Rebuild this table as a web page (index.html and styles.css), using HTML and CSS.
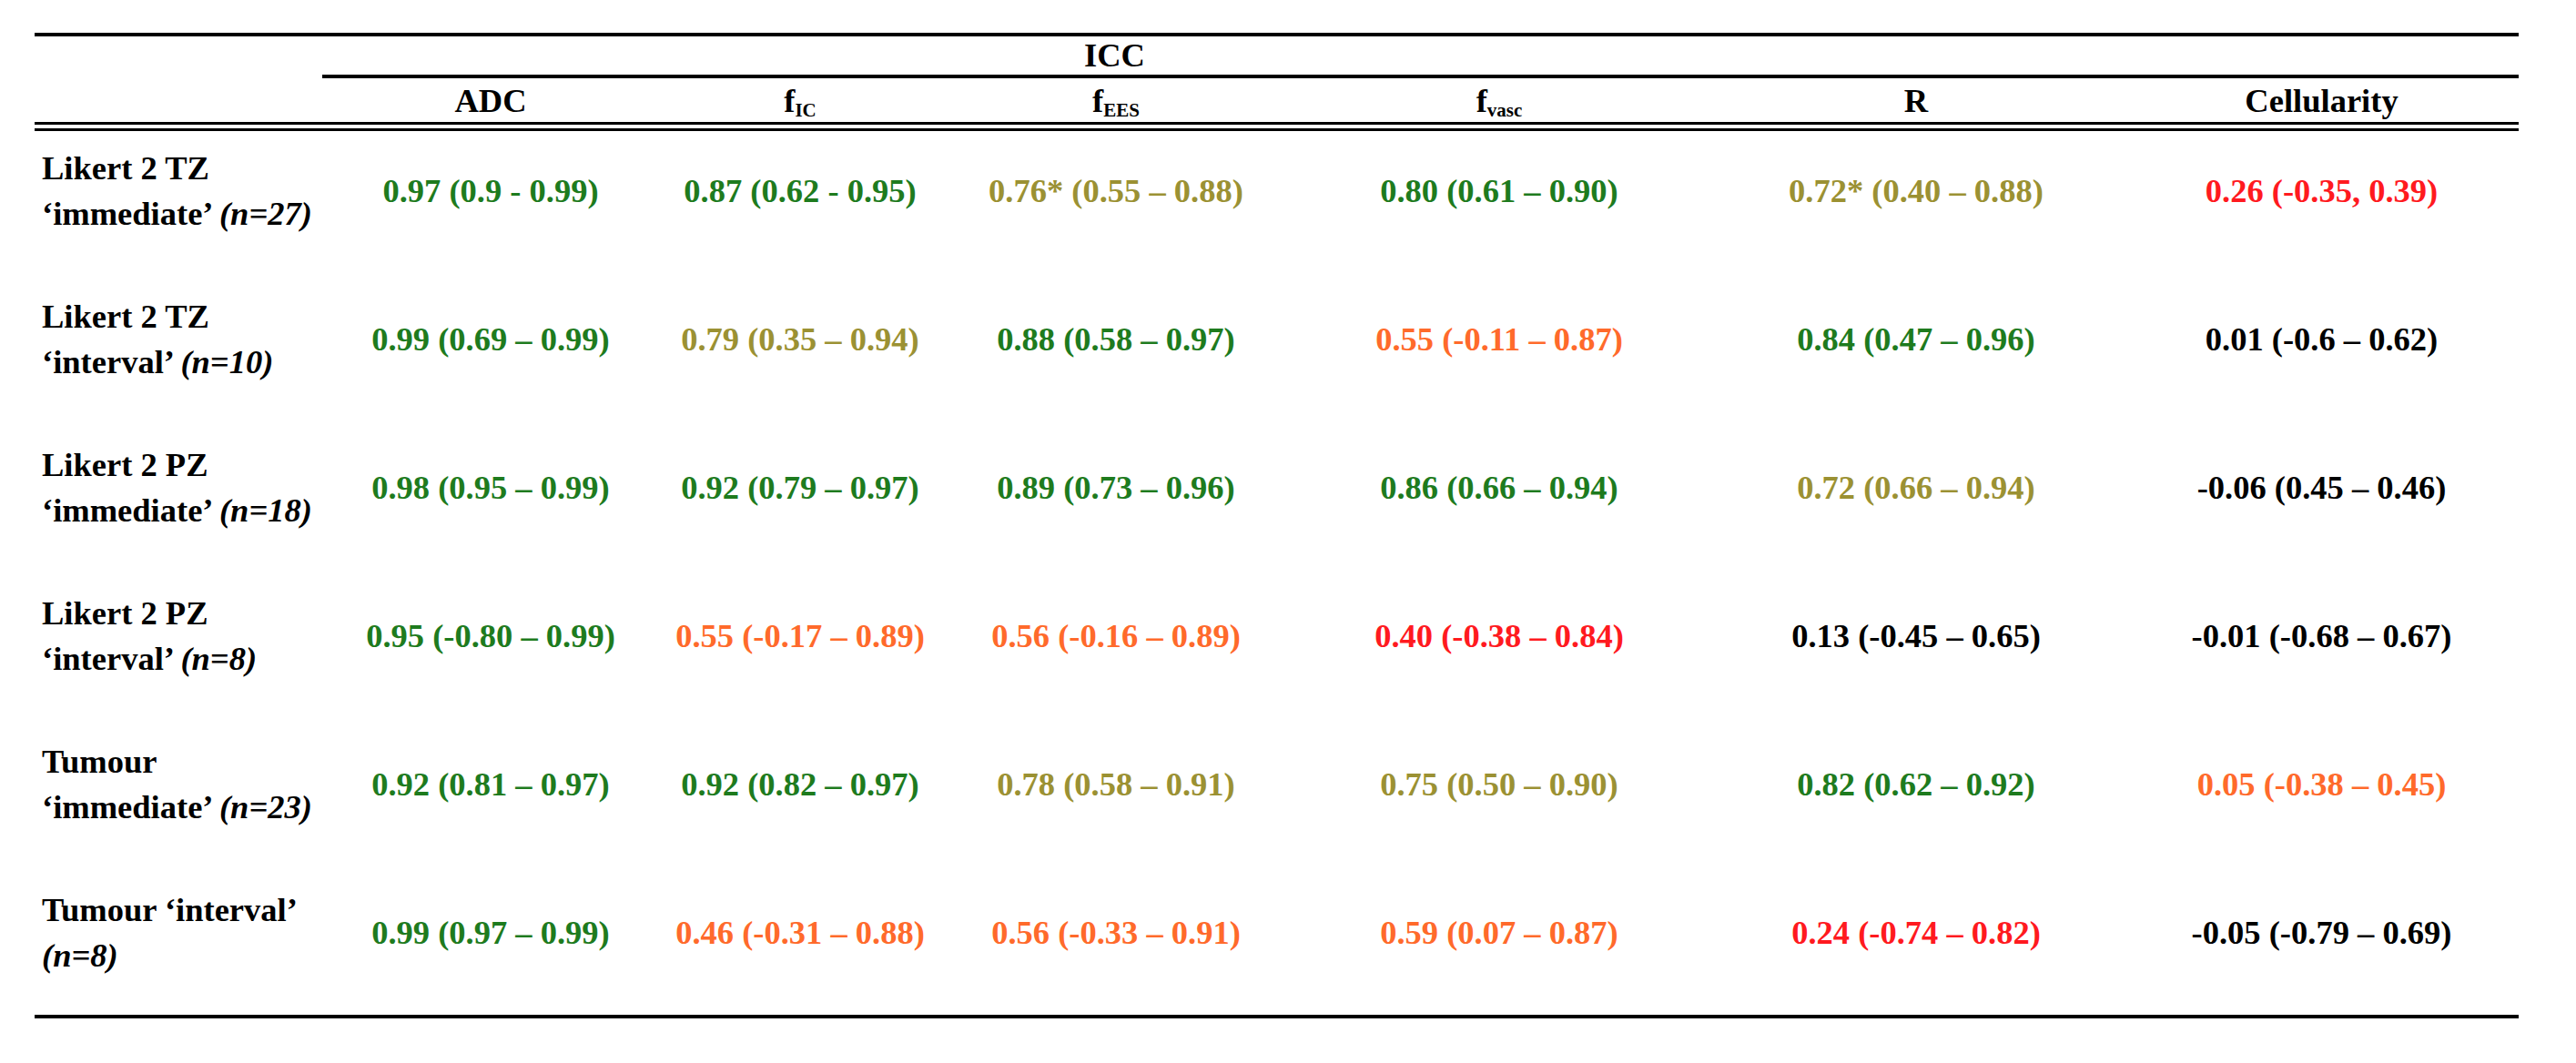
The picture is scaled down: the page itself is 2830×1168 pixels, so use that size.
FILE: index.html
```html
<!DOCTYPE html>
<html lang="en">
<head>
<meta charset="utf-8">
<title>ICC table</title>
<link rel="stylesheet" href="styles.css">
</head>
<body>
<table class="icc">
  <colgroup>
    <col class="c-label">
    <col class="c-adc">
    <col class="c-fic">
    <col class="c-fees">
    <col class="c-fvasc">
    <col class="c-r">
    <col class="c-cell">
  </colgroup>
  <thead>
    <tr class="h1">
      <th class="corner" rowspan="2"></th>
      <th class="group" colspan="6">ICC</th>
    </tr>
    <tr class="h2">
      <th>ADC</th>
      <th>f<span class="sub">IC</span></th>
      <th>f<span class="sub">EES</span></th>
      <th>f<span class="sub">vasc</span></th>
      <th>R</th>
      <th>Cellularity</th>
    </tr>
  </thead>
  <tbody>
    <tr>
      <td class="label">Likert 2 TZ<br>‘immediate’ <i>(n=27)</i></td>
      <td class="g">0.97 (0.9 - 0.99)</td>
      <td class="g">0.87 (0.62 - 0.95)</td>
      <td class="o">0.76* (0.55 – 0.88)</td>
      <td class="g">0.80 (0.61 – 0.90)</td>
      <td class="o">0.72* (0.40 – 0.88)</td>
      <td class="r">0.26 (-0.35, 0.39)</td>
    </tr>
    <tr>
      <td class="label">Likert 2 TZ<br>‘interval’ <i>(n=10)</i></td>
      <td class="g">0.99 (0.69 – 0.99)</td>
      <td class="o">0.79 (0.35 – 0.94)</td>
      <td class="g">0.88 (0.58 – 0.97)</td>
      <td class="or">0.55 (-0.11 – 0.87)</td>
      <td class="g">0.84 (0.47 – 0.96)</td>
      <td class="k">0.01 (-0.6 – 0.62)</td>
    </tr>
    <tr>
      <td class="label">Likert 2 PZ<br>‘immediate’ <i>(n=18)</i></td>
      <td class="g">0.98 (0.95 – 0.99)</td>
      <td class="g">0.92 (0.79 – 0.97)</td>
      <td class="g">0.89 (0.73 – 0.96)</td>
      <td class="g">0.86 (0.66 – 0.94)</td>
      <td class="o">0.72 (0.66 – 0.94)</td>
      <td class="k">-0.06 (0.45 – 0.46)</td>
    </tr>
    <tr>
      <td class="label">Likert 2 PZ<br>‘interval’ <i>(n=8)</i></td>
      <td class="g">0.95 (-0.80 – 0.99)</td>
      <td class="or">0.55 (-0.17 – 0.89)</td>
      <td class="or">0.56 (-0.16 – 0.89)</td>
      <td class="r">0.40 (-0.38 – 0.84)</td>
      <td class="k">0.13 (-0.45 – 0.65)</td>
      <td class="k">-0.01 (-0.68 – 0.67)</td>
    </tr>
    <tr>
      <td class="label">Tumour<br>‘immediate’ <i>(n=23)</i></td>
      <td class="g">0.92 (0.81 – 0.97)</td>
      <td class="g">0.92 (0.82 – 0.97)</td>
      <td class="o">0.78 (0.58 – 0.91)</td>
      <td class="o">0.75 (0.50 – 0.90)</td>
      <td class="g">0.82 (0.62 – 0.92)</td>
      <td class="or">0.05 (-0.38 – 0.45)</td>
    </tr>
    <tr class="last">
      <td class="label">Tumour ‘interval’<br><i>(n=8)</i></td>
      <td class="g">0.99 (0.97 – 0.99)</td>
      <td class="or">0.46 (-0.31 – 0.88)</td>
      <td class="or">0.56 (-0.33 – 0.91)</td>
      <td class="or">0.59 (0.07 – 0.87)</td>
      <td class="r">0.24 (-0.74 – 0.82)</td>
      <td class="k">-0.05 (-0.79 – 0.69)</td>
    </tr>
  </tbody>
</table>
</body>
</html>
```

FILE: styles.css
```css
html, body {
  margin: 0;
  padding: 0;
  background: #ffffff;
}

body {
  font-family: "Liberation Serif", "Times New Roman", serif;
  font-weight: bold;
  font-size: 36.5px;
  color: #000000;
}

.icc {
  margin: 36px 0 0 38px;
  width: 2729px;
  table-layout: fixed;
  border-collapse: separate;
  border-spacing: 0;
}

.c-label { width: 316px; }
.c-adc   { width: 370px; }
.c-fic   { width: 310px; }
.c-fees  { width: 384px; }
.c-fvasc { width: 458px; }
.c-r     { width: 458px; }
.c-cell  { width: 433px; }

.icc th,
.icc td {
  padding: 0;
  font-weight: bold;
  white-space: nowrap;
}

.icc th {
  text-align: center;
}

.corner {
  border-top: 4px solid #000;
  border-bottom: 10px double #000;
}

.icc th.group {
  border-top: 4px solid #000;
  border-bottom: 4px solid #000;
  height: 42px;
  line-height: 42px;
  text-align: left;
  padding-left: 837px;
}

.h2 th {
  border-bottom: 10px double #000;
  padding-top: 2px;
  height: 46px;
  line-height: 46px;
}

.sub {
  font-size: 21px;
  vertical-align: -5px;
  line-height: 0;
}

.icc td {
  text-align: center;
  vertical-align: middle;
  line-height: 50px;
  padding-top: 16px;
  padding-bottom: 47px;
}

.icc td.label {
  text-align: left;
  padding-left: 8px;
}

.icc tr.last td {
  padding-bottom: 40px;
  border-bottom: 4px solid #000;
}

.label i {
  font-style: italic;
}

.g  { color: #1e7b1e; }
.o  { color: #9b9133; }
.or { color: #ff6a2b; }
.r  { color: #ff1a1f; }
.k  { color: #000000; }
```
